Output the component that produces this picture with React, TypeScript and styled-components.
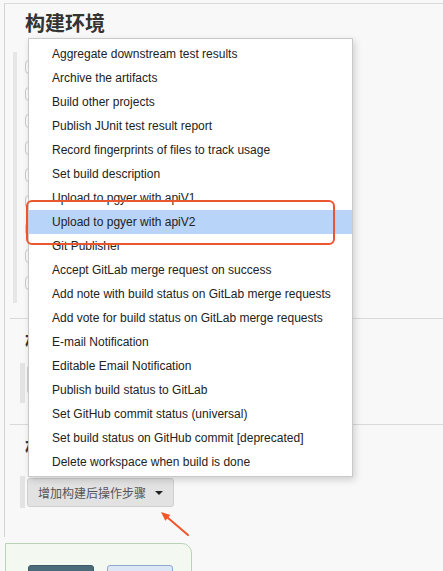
import React from "react";
import styled, { createGlobalStyle } from "styled-components";

const Global = createGlobalStyle`
  html, body { margin: 0; padding: 0; background: #f8f8f8; }
  body {
    font-family: "Liberation Sans", "Noto Sans CJK SC", sans-serif;
    font-size: 13px;
    color: #333;
    overflow: hidden;
  }
`;

const Page = styled.div`
  position: relative;
  width: 443px;
  height: 571px;
  overflow: hidden;
  padding-top: 3px;
  box-sizing: border-box;
`;

const Frame = styled.div`
  margin-left: 4px;
  border-left: 1px solid #d3d3d3;
  border-top: 1px solid #dcdcdc;
  padding-top: 7px;
  padding-bottom: 29px;
`;

const Heading = styled.h2<{ $top?: number }>`
  margin: ${(p) => p.$top ?? 0}px 0 0 20px;
  height: 24px;
  line-height: 24px;
  font-size: 20px;
  font-weight: bold;
  color: #333;
  font-family: "Noto Sans CJK SC", "Liberation Sans", sans-serif;
`;

const CheckGroup = styled.div`
  margin: 17px 0 0 8px;
  border-left: 4px solid #e6e6e6;
  padding: 1px 0 7px 8px;
`;

const CheckRow = styled.label`
  display: flex;
  align-items: center;
  gap: 7px;
  height: 27px;
  color: #333;
  font-size: 12px;
  white-space: nowrap;
`;

const Box = styled.span`
  width: 12px;
  height: 12px;
  border: 1px solid #cacaca;
  border-radius: 4px;
  background: #fbfbfb;
  flex: none;
`;

const Divider = styled.div<{ $top: number }>`
  margin: ${(p) => p.$top}px 0 0 5px;
  border-top: 1px solid #d9d9d9;
`;

const StepBar = styled.div<{ $top: number; $h?: number }>`
  margin: ${(p) => p.$top}px 0 0 15px;
  border-left: 5px solid #e3e3e3;
  padding: 2px 0 1px 2px;
  min-height: ${(p) => p.$h ?? 0}px;
  box-sizing: border-box;
`;

const AddButton = styled.button`
  display: inline-flex;
  align-items: center;
  height: 29px;
  padding: 0 10px;
  gap: 9px;
  border: 1px solid #cfcfcf;
  border-radius: 3px;
  background: #e2e2e2;
  color: #555;
  font-size: 12px;
  font-family: "Noto Sans CJK SC", "Liberation Sans", sans-serif;
`;

const Caret = styled.span`
  width: 0;
  height: 0;
  border-left: 4px solid transparent;
  border-right: 4px solid transparent;
  border-top: 4px solid #222;
  margin-top: 1px;
`;

const SaveBar = styled.div`
  margin: 6px 0 0 5px;
  width: 187px;
  height: 70px;
  box-sizing: border-box;
  border: 1px solid #b9d4b3;
  border-top-right-radius: 10px;
  background: #f3f8f0;
  padding: 21px 0 0 22px;
  display: flex;
  align-items: flex-start;
  gap: 13px;
`;

const SaveButton = styled.button<{ $primary?: boolean }>`
  width: 66px;
  height: 40px;
  border-radius: 3px;
  border: 1px solid ${(p) => (p.$primary ? "#3e5a68" : "#8fa9d1")};
  background: ${(p) => (p.$primary ? "#4b6a7a" : "#dce7f5")};
  color: ${(p) => (p.$primary ? "#fff" : "#333")};
  font-size: 13px;
  font-family: "Noto Sans CJK SC", sans-serif;
`;

const Menu = styled.ul`
  position: absolute;
  left: 28px;
  top: 38px;
  width: 325px;
  height: 439px;
  box-sizing: border-box;
  margin: 0;
  padding: 3px 0 0 0;
  list-style: none;
  background: #fff;
  border: 1px solid #c9c9c9;
  box-shadow: 2px 3px 7px rgba(0, 0, 0, 0.16);
`;

const MenuItem = styled.li<{ $active?: boolean }>`
  height: 24px;
  line-height: 24px;
  padding-left: 23px;
  font-size: 12px;
  color: #222;
  white-space: nowrap;
  background: ${(p) => (p.$active ? "#b8d4f8" : "transparent")};
`;

const Highlight = styled.div`
  position: absolute;
  left: 26px;
  top: 200px;
  width: 309px;
  height: 45px;
  box-sizing: border-box;
  border: 2px solid #ea5630;
  border-radius: 6px;
`;

const Arrow = styled.svg`
  position: absolute;
  left: 155px;
  top: 508px;
`;

const checks = [
  "Delete workspace before build starts",
  "Use secret text(s) or file(s)",
  "Abort the build if it's stuck",
  "Add timestamps to the Console Output",
  "Provide Configuration files",
  "Set Build Name",
  "With Ant",
  "Inject environment variables",
  "Run with timeout",
];

const items = [
  "Aggregate downstream test results",
  "Archive the artifacts",
  "Build other projects",
  "Publish JUnit test result report",
  "Record fingerprints of files to track usage",
  "Set build description",
  "Upload to pgyer with apiV1",
  "Upload to pgyer with apiV2",
  "Git Publisher",
  "Accept GitLab merge request on success",
  "Add note with build status on GitLab merge requests",
  "Add vote for build status on GitLab merge requests",
  "E-mail Notification",
  "Editable Email Notification",
  "Publish build status to GitLab",
  "Set GitHub commit status (universal)",
  "Set build status on GitHub commit [deprecated]",
  "Delete workspace when build is done",
];

export default function App() {
  return (
    <Page>
      <Global />
      <Frame>
        <Heading>构建环境</Heading>
        <CheckGroup>
          {checks.map((c) => (
            <CheckRow key={c}>
              <Box />
              {c}
            </CheckRow>
          ))}
        </CheckGroup>
        <Divider $top={15} />
        <Heading $top={10}>构建</Heading>
        <StepBar $top={10} $h={40}>
          <AddButton>
            增加构建步骤
            <Caret />
          </AddButton>
        </StepBar>
        <Divider $top={21} />
        <Heading $top={10}>构建后操作</Heading>
        <StepBar $top={17}>
          <AddButton>
            增加构建后操作步骤
            <Caret />
          </AddButton>
        </StepBar>
      </Frame>
      <SaveBar>
        <SaveButton $primary>保存</SaveButton>
        <SaveButton>应用</SaveButton>
      </SaveBar>

      <Menu>
        {items.map((it, i) => (
          <MenuItem key={it} $active={i === 7}>
            {it}
          </MenuItem>
        ))}
      </Menu>
      <Highlight />
      <Arrow width="40" height="32" viewBox="0 0 40 32">
        <line x1="12.5" y1="9.5" x2="33" y2="27" stroke="#f0562a" strokeWidth="2" strokeLinecap="round" />
        <polygon points="6,4 10.3,12.7 15.4,6.9" fill="#f0562a" />
      </Arrow>
    </Page>
  );
}
